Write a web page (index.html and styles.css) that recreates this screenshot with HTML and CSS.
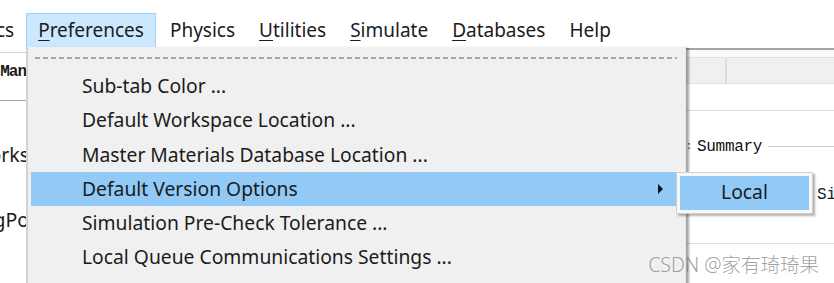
FILE: index.html
```html
<!DOCTYPE html>
<html lang="en">
<head>
  <meta charset="UTF-8">
  <meta name="viewport" content="width=device-width, initial-scale=1.0">
  <title>Preferences Menu</title>
  <link rel="stylesheet" href="styles.css">
</head>
<body>

  <div class="window">
    <!-- Menu bar -->
    <div class="menubar">
      <span class="menu-item cut">ics</span>
      <span class="menu-item active"><u>P</u>references</span>
      <span class="menu-item">Physics</span>
      <span class="menu-item"><u>U</u>tilities</span>
      <span class="menu-item"><u>S</u>imulate</span>
      <span class="menu-item"><u>D</u>atabases</span>
      <span class="menu-item">Help</span>
    </div>

    <!-- Panels behind the open menu -->
    <div class="workspace">
      <div class="left-panel">
        <div class="left-head">Man</div>
        <div class="left-row">orks</div>
        <div class="left-row">gPo</div>
      </div>
      <div class="spacer"></div>
      <div class="right-panel">
        <div class="tab-strip"></div>
        <div class="tab-head">
          <div class="tab-col first"></div>
          <div class="tab-col"></div>
        </div>
        <div class="blank-row"></div>
        <div class="group">
          <span class="group-mark">:</span>
          <span class="group-title">Summary</span>
          <span class="group-line"></span>
        </div>
        <div class="si-row">Si</div>
        <div class="bottom-row"></div>
      </div>
    </div>

    <!-- Open dropdown -->
    <div class="dropdown">
      <div class="tearoff"></div>
      <div class="drop-item">Sub-tab Color ...</div>
      <div class="drop-item">Default Workspace Location ...</div>
      <div class="drop-item">Master Materials Database Location ...</div>
      <div class="drop-item selected">Default Version Options <span class="arrow"></span></div>
      <div class="drop-item">Simulation Pre-Check Tolerance ...</div>
      <div class="drop-item">Local Queue Communications Settings ...</div>
    </div>

    <!-- Submenu -->
    <div class="submenu">
      <div class="sub-item">Local</div>
    </div>

    <div class="watermark">CSDN @家有琦琦果</div>
  </div>

</body>
</html>
```

FILE: styles.css
```css
/* General Reset */
* {
  margin: 0;
  padding: 0;
  box-sizing: border-box;
}

body {
  font-family: "Noto Sans", "Open Sans", sans-serif;
  background-color: #fff;
  color: #1b1b1b;
  width: 834px;
  height: 283px;
  overflow: hidden;
}

.window {
  position: relative;
  width: 834px;
  height: 283px;
  overflow: hidden;
}

/* Menu bar */
.menubar {
  display: flex;
  align-items: flex-end;
  height: 47px;
  font-size: 19px;
}

.menu-item {
  height: 34px;
  line-height: 33px;
  padding: 0 10px 0 12px;
  border: 1px solid transparent;
  border-bottom: none;
  white-space: nowrap;
}

.menu-item.cut {
  margin-left: -22px;
  padding-right: 11px;
}

.menu-item.active {
  background-color: #cce8ff;
  border-color: #99d1ff;
  padding: 0 11px;
  margin-right: 1px;
}

.menu-item u {
  text-underline-offset: 3px;
}

/* Background panels */
.workspace {
  display: flex;
  height: 236px;
}

.left-panel {
  width: 27px;
  border-right: 1px solid #d5d5d5;
  overflow: hidden;
}

.left-head {
  margin-top: 5px;
  height: 49px;
  border-top: 1px solid #d0d0d0;
  border-bottom: 1px solid #a8a8a8;
  font-family: "Liberation Mono", monospace;
  font-size: 16px;
  font-weight: bold;
  line-height: 38px;
  direction: rtl;
  white-space: nowrap;
  letter-spacing: -1px;
}

.left-row {
  height: 65px;
  padding-top: 42px;
  line-height: 24px;
  font-size: 19.5px;
  direction: rtl;
  white-space: nowrap;
  text-align: right;
  margin-right: -3px;
}

.spacer {
  flex: 1;
}

.right-panel {
  width: 148px;
}

.tab-strip {
  height: 9px;
  border-top: 2px solid #a5a5a5;
  margin-top: 1px;
  background-color: #fafafa;
}

.tab-head {
  display: flex;
  height: 27px;
  background-color: #f0f0f0;
  border-top: 1px solid #e0e0e0;
  border-bottom: 1px solid #e0e0e0;
}

.tab-col {
  flex: 1;
}

.tab-col.first {
  flex: none;
  width: 41px;
  border-right: 2px solid #dcdcdc;
}

.blank-row {
  height: 27px;
  border-bottom: 1px solid #e0e0e0;
}

.group {
  display: flex;
  align-items: center;
  height: 50px;
  padding-top: 21px;
  font-family: "Liberation Mono", monospace;
  font-size: 16px;
}

.group-mark {
  width: 11px;
  font-size: 10px;
}

.group-title {
  color: #111;
  letter-spacing: -0.3px;
}

.group-line {
  flex: 1;
  height: 1px;
  margin-left: 6px;
  background-color: #c8c8c8;
}

.si-row {
  height: 83px;
  padding-top: 25px;
  padding-left: 131px;
  font-family: "Liberation Mono", monospace;
  font-size: 16px;
  border-bottom: 1px solid #e0e0e0;
}

/* Open dropdown */
.dropdown {
  position: absolute;
  left: 27px;
  top: 47px;
  width: 659px;
  height: 240px;
  background-color: #f0f0f0;
  border-left: 1px solid #cfcfcf;
  border-right: 1px solid #e6e6e6;
  box-shadow: 4px 0 2px -1px rgba(0, 0, 0, 0.35);
  padding: 10px 2px 0 3px;
  font-size: 19.3px;
}

.tearoff {
  height: 2px;
  margin: 0 6px 10px 4px;
  background: repeating-linear-gradient(to right, #a9a9a9 0, #a9a9a9 5px, transparent 5px, transparent 8px);
}

.drop-item {
  position: relative;
  height: 34.3px;
  line-height: 33px;
  padding-left: 51px;
  white-space: nowrap;
}

.drop-item.selected {
  background-color: #91c9f7;
}

.arrow {
  position: absolute;
  left: 627px;
  top: 12px;
  width: 0;
  height: 0;
  border-top: 5px solid transparent;
  border-bottom: 5px solid transparent;
  border-left: 5px solid #111;
}

/* Submenu */
.submenu {
  position: absolute;
  left: 676px;
  top: 172px;
  width: 137px;
  height: 42px;
  padding: 3px;
  background-color: #f7f7f7;
  border: 1px solid #cfcfcf;
  box-shadow: 2px 2px 2px rgba(0, 0, 0, 0.3);
}

.sub-item {
  height: 100%;
  background-color: #91c9f7;
  text-align: center;
  font-size: 19.3px;
  line-height: 32px;
}

.watermark {
  position: absolute;
  right: 15px;
  bottom: 5px;
  font-family: "Noto Sans", "Noto Sans CJK SC", sans-serif;
  font-size: 19.5px;
  font-weight: 300;
  color: rgba(120, 120, 120, 0.7);
}
```
